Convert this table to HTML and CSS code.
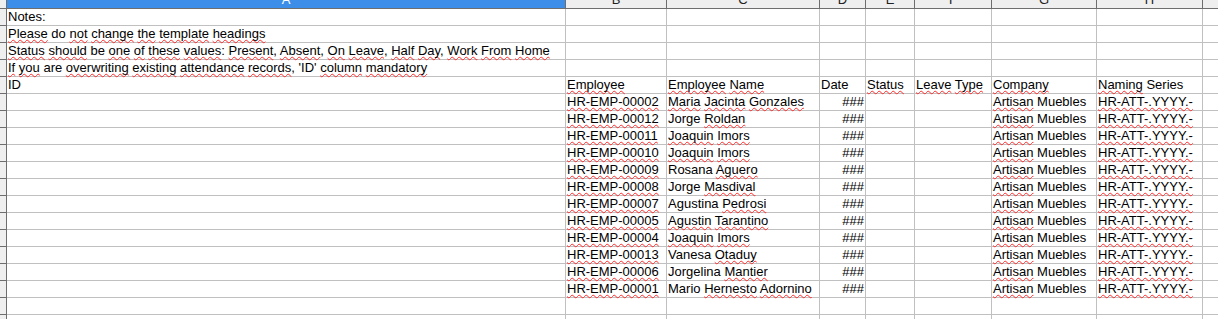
FILE: index.html
```html
<!DOCTYPE html>
<html>
<head>
<meta charset="utf-8">
<link rel="stylesheet" href="styles.css">
</head>
<body>
<div class="sheet">
  <div class="row hdr">
    <div class="c rh corner"></div>
    <div class="c ch sel"><span>A</span></div>
    <div class="c ch"><span>B</span></div>
    <div class="c ch"><span>C</span></div>
    <div class="c ch"><span>D</span></div>
    <div class="c ch"><span>E</span></div>
    <div class="c ch"><span>F</span></div>
    <div class="c ch"><span>G</span></div>
    <div class="c ch"><span>H</span></div>
    <div class="c ch last"></div>
  </div>

  <div class="row">
    <div class="c rh"></div>
    <div class="c">Notes:</div>
    <div class="c"></div><div class="c"></div><div class="c"></div><div class="c"></div><div class="c"></div><div class="c"></div><div class="c"></div><div class="c last"></div>
  </div>
  <div class="row">
    <div class="c rh"></div>
    <div class="c"><span class="sp">Please</span> do <span class="sp">not</span> <span class="sp">change</span> <span class="sp">the</span> <span class="sp">template</span> <span class="sp">headings</span></div>
    <div class="c"></div><div class="c"></div><div class="c"></div><div class="c"></div><div class="c"></div><div class="c"></div><div class="c"></div><div class="c last"></div>
  </div>
  <div class="row">
    <div class="c rh"></div>
    <div class="c"><span class="sp">Status</span> <span class="sp">should</span> be <span class="sp">one</span> <span class="sp">of</span> <span class="sp">these</span> <span class="sp">values</span>: <span class="sp">Present</span>, <span class="sp">Absent</span>, <span class="sp">On</span> <span class="sp">Leave</span>, <span class="sp">Half</span> <span class="sp">Day</span>, <span class="sp">Work</span> <span class="sp">From</span> <span class="sp">Home</span></div>
    <div class="c"></div><div class="c"></div><div class="c"></div><div class="c"></div><div class="c"></div><div class="c"></div><div class="c"></div><div class="c last"></div>
  </div>
  <div class="row">
    <div class="c rh"></div>
    <div class="c"><span class="sp">If</span> <span class="sp">you</span> are <span class="sp">overwriting</span> <span class="sp">existing</span> <span class="sp">attendance</span> <span class="sp">records</span>, 'ID' <span class="sp">column</span> <span class="sp">mandatory</span></div>
    <div class="c"></div><div class="c"></div><div class="c"></div><div class="c"></div><div class="c"></div><div class="c"></div><div class="c"></div><div class="c last"></div>
  </div>
  <div class="row">
    <div class="c rh"></div>
    <div class="c">ID</div>
    <div class="c"><span class="sp">Employee</span></div>
    <div class="c"><span class="sp">Employee</span> <span class="sp">Name</span></div>
    <div class="c">Date</div>
    <div class="c"><span class="sp">Status</span></div>
    <div class="c"><span class="sp">Leave</span> <span class="sp">Type</span></div>
    <div class="c"><span class="sp">Company</span></div>
    <div class="c"><span class="sp">Naming</span> Series</div>
    <div class="c last"></div>
  </div>

  <div class="row">
    <div class="c rh"></div><div class="c"></div>
    <div class="c"><span class="sp">HR-EMP-00002</span></div>
    <div class="c"><span class="sp">Maria</span> <span class="sp">Jacinta</span> <span class="sp">Gonzales</span></div>
    <div class="c num">###</div><div class="c"></div><div class="c"></div>
    <div class="c"><span class="sp">Artisan</span> Muebles</div>
    <div class="c"><span class="sp">HR-ATT-.YYYY.-</span></div>
    <div class="c last"></div>
  </div>
  <div class="row">
    <div class="c rh"></div><div class="c"></div>
    <div class="c"><span class="sp">HR-EMP-00012</span></div>
    <div class="c">Jorge <span class="sp">Roldan</span></div>
    <div class="c num">###</div><div class="c"></div><div class="c"></div>
    <div class="c"><span class="sp">Artisan</span> Muebles</div>
    <div class="c"><span class="sp">HR-ATT-.YYYY.-</span></div>
    <div class="c last"></div>
  </div>
  <div class="row">
    <div class="c rh"></div><div class="c"></div>
    <div class="c"><span class="sp">HR-EMP-00011</span></div>
    <div class="c"><span class="sp">Joaquin</span> <span class="sp">Imors</span></div>
    <div class="c num">###</div><div class="c"></div><div class="c"></div>
    <div class="c"><span class="sp">Artisan</span> Muebles</div>
    <div class="c"><span class="sp">HR-ATT-.YYYY.-</span></div>
    <div class="c last"></div>
  </div>
  <div class="row">
    <div class="c rh"></div><div class="c"></div>
    <div class="c"><span class="sp">HR-EMP-00010</span></div>
    <div class="c"><span class="sp">Joaquin</span> <span class="sp">Imors</span></div>
    <div class="c num">###</div><div class="c"></div><div class="c"></div>
    <div class="c"><span class="sp">Artisan</span> Muebles</div>
    <div class="c"><span class="sp">HR-ATT-.YYYY.-</span></div>
    <div class="c last"></div>
  </div>
  <div class="row">
    <div class="c rh"></div><div class="c"></div>
    <div class="c"><span class="sp">HR-EMP-00009</span></div>
    <div class="c">Rosana <span class="sp">Aguero</span></div>
    <div class="c num">###</div><div class="c"></div><div class="c"></div>
    <div class="c"><span class="sp">Artisan</span> Muebles</div>
    <div class="c"><span class="sp">HR-ATT-.YYYY.-</span></div>
    <div class="c last"></div>
  </div>
  <div class="row">
    <div class="c rh"></div><div class="c"></div>
    <div class="c"><span class="sp">HR-EMP-00008</span></div>
    <div class="c">Jorge <span class="sp">Masdival</span></div>
    <div class="c num">###</div><div class="c"></div><div class="c"></div>
    <div class="c"><span class="sp">Artisan</span> Muebles</div>
    <div class="c"><span class="sp">HR-ATT-.YYYY.-</span></div>
    <div class="c last"></div>
  </div>
  <div class="row">
    <div class="c rh"></div><div class="c"></div>
    <div class="c"><span class="sp">HR-EMP-00007</span></div>
    <div class="c">Agustina <span class="sp">Pedrosi</span></div>
    <div class="c num">###</div><div class="c"></div><div class="c"></div>
    <div class="c"><span class="sp">Artisan</span> Muebles</div>
    <div class="c"><span class="sp">HR-ATT-.YYYY.-</span></div>
    <div class="c last"></div>
  </div>
  <div class="row">
    <div class="c rh"></div><div class="c"></div>
    <div class="c"><span class="sp">HR-EMP-00005</span></div>
    <div class="c"><span class="sp">Agustin</span> <span class="sp">Tarantino</span></div>
    <div class="c num">###</div><div class="c"></div><div class="c"></div>
    <div class="c"><span class="sp">Artisan</span> Muebles</div>
    <div class="c"><span class="sp">HR-ATT-.YYYY.-</span></div>
    <div class="c last"></div>
  </div>
  <div class="row">
    <div class="c rh"></div><div class="c"></div>
    <div class="c"><span class="sp">HR-EMP-00004</span></div>
    <div class="c"><span class="sp">Joaquin</span> <span class="sp">Imors</span></div>
    <div class="c num">###</div><div class="c"></div><div class="c"></div>
    <div class="c"><span class="sp">Artisan</span> Muebles</div>
    <div class="c"><span class="sp">HR-ATT-.YYYY.-</span></div>
    <div class="c last"></div>
  </div>
  <div class="row">
    <div class="c rh"></div><div class="c"></div>
    <div class="c"><span class="sp">HR-EMP-00013</span></div>
    <div class="c">Vanesa <span class="sp">Otaduy</span></div>
    <div class="c num">###</div><div class="c"></div><div class="c"></div>
    <div class="c"><span class="sp">Artisan</span> Muebles</div>
    <div class="c"><span class="sp">HR-ATT-.YYYY.-</span></div>
    <div class="c last"></div>
  </div>
  <div class="row">
    <div class="c rh"></div><div class="c"></div>
    <div class="c"><span class="sp">HR-EMP-00006</span></div>
    <div class="c">Jorgelina <span class="sp">Mantier</span></div>
    <div class="c num">###</div><div class="c"></div><div class="c"></div>
    <div class="c"><span class="sp">Artisan</span> Muebles</div>
    <div class="c"><span class="sp">HR-ATT-.YYYY.-</span></div>
    <div class="c last"></div>
  </div>
  <div class="row">
    <div class="c rh"></div><div class="c"></div>
    <div class="c"><span class="sp">HR-EMP-00001</span></div>
    <div class="c">Mario <span class="sp">Hernesto</span> <span class="sp">Adornino</span></div>
    <div class="c num">###</div><div class="c"></div><div class="c"></div>
    <div class="c"><span class="sp">Artisan</span> Muebles</div>
    <div class="c"><span class="sp">HR-ATT-.YYYY.-</span></div>
    <div class="c last"></div>
  </div>

  <div class="row">
    <div class="c rh"></div><div class="c"></div><div class="c"></div><div class="c"></div><div class="c"></div><div class="c"></div><div class="c"></div><div class="c"></div><div class="c"></div><div class="c last"></div>
  </div>
  <div class="row">
    <div class="c rh"></div><div class="c"></div><div class="c"></div><div class="c"></div><div class="c"></div><div class="c"></div><div class="c"></div><div class="c"></div><div class="c"></div><div class="c last"></div>
  </div>
</div>
</body>
</html>
```

FILE: styles.css
```css
html, body {
  margin: 0;
  padding: 0;
  background: #ffffff;
  overflow: hidden;
}

.sheet {
  width: 1218px;
  font-family: "Liberation Sans", Arial, sans-serif;
  font-size: 13px;
  color: #000000;
}

.row {
  display: grid;
  grid-template-columns: 7px 559px 101px 153px 46px 49px 77px 105px 106px 1fr;
  height: 17px;
}

.c {
  box-sizing: border-box;
  border-right: 1px solid #c0c0c0;
  border-bottom: 1px solid #c0c0c0;
  padding-left: 1px;
  line-height: 16px;
  white-space: nowrap;
  overflow: visible;
}

.c.last {
  border-right: none;
}

.num {
  text-align: right;
  padding-right: 1px;
}

.rh {
  background: #efefef;
  border-right: 1px solid #6e6e6e;
  border-bottom: 1px solid #6e6e6e;
  padding: 0;
}

.hdr {
  height: 9px;
}

.ch {
  background: #efefef;
  border-right: 1px solid #6e6e6e;
  border-bottom: 1px solid #6e6e6e;
  overflow: hidden;
  text-align: center;
  padding: 0;
  color: #222222;
}

.ch span {
  display: block;
  margin-top: -8px;
  line-height: 16px;
}

.ch.sel {
  background: #3c8ee8;
  color: #ffffff;
}

.corner {
  background: #efefef;
}

.sp {
  text-decoration: underline wavy #ff2a2a;
  text-decoration-thickness: 1px;
  text-decoration-skip-ink: none;
  text-underline-offset: 1px;
}
```
